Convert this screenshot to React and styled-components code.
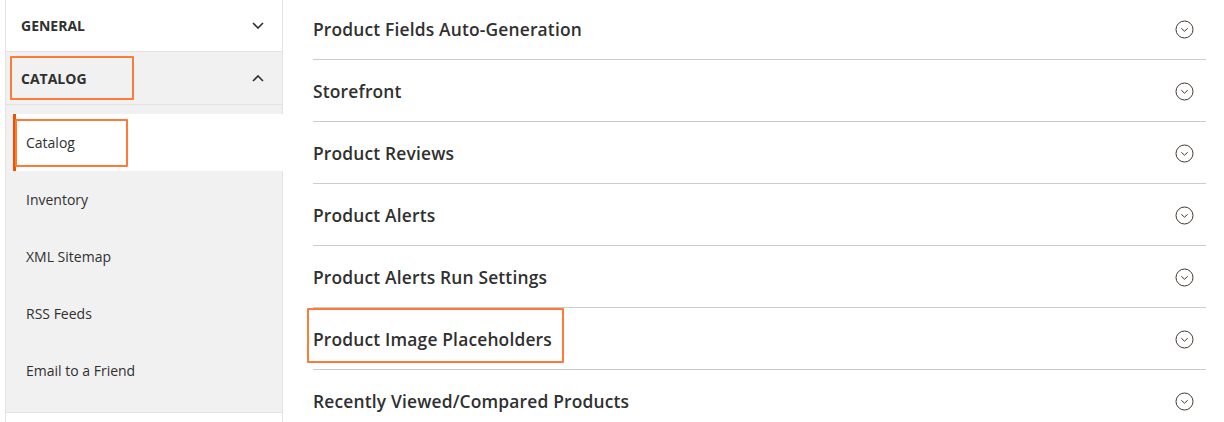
import styled, { createGlobalStyle } from 'styled-components';

const GlobalStyle = createGlobalStyle`
  html, body {
    margin: 0;
    background: #fff;
    overflow: hidden;
  }
  body {
    font-family: "Open Sans", "DejaVu Sans", sans-serif;
    color: #303030;
  }
  * {
    box-sizing: border-box;
  }
`;

const Page = styled.div`
  display: flex;
  align-items: flex-start;
  height: 422px;
  overflow: hidden;
`;

// Left config navigation
const Sidebar = styled.nav`
  flex-shrink: 0;
  align-self: stretch;
  width: 278px;
  margin-left: 5px;
  border-left: 1px solid #e3e3e3;
  border-right: 1px solid #e3e3e3;
`;

const GroupHeader = styled.div`
  position: relative;
  display: flex;
  align-items: center;
  justify-content: space-between;
  height: ${(p) => (p.$open ? '53px' : '52px')};
  padding: 0 18px 0 15px;
  background: ${(p) => (p.$open ? '#f1f1f1' : '#fff')};
  border-bottom: 1px solid #e3e3e3;
`;

const GroupTitle = styled.span`
  font-size: 14px;
  font-weight: 700;
  text-transform: uppercase;
  color: #303030;
`;

const ItemList = styled.ul`
  list-style: none;
  margin: 0;
  padding: 9px 0 13px;
  background: #f1f1f1;
  border-bottom: 1px solid #e3e3e3;
`;

const NavItem = styled.li`
  position: relative;
  display: flex;
  align-items: center;
  height: 57px;
  margin-left: 7px;
  margin-right: -1px;
  padding-left: 10px;
  font-size: 14px;
  color: #303030;
  border-left: 3px solid ${(p) => (p.$current ? '#eb5202' : 'transparent')};
  background: ${(p) => (p.$current ? '#fff' : 'transparent')};
`;

// Orange annotation frames drawn over the screenshot
const Highlight = styled.span`
  position: absolute;
  border: 2px solid #ff7a38;
  border-radius: 1px;
  pointer-events: none;
`;

// Right column with collapsible sections
const Content = styled.div`
  width: 893px;
  margin-left: 30px;
  margin-top: -2px;
`;

const SectionRow = styled.div`
  position: relative;
  display: flex;
  align-items: center;
  justify-content: space-between;
  height: 62px;
  padding-right: 12px;
  border-bottom: 1px solid #cccccc;
`;

const SectionTitle = styled.span`
  font-size: 17.4px;
  font-weight: 600;
  letter-spacing: 0.17px;
  color: #303030;
`;

const CircleToggle = styled.svg`
  width: 19px;
  height: 19px;
  margin-top: 2px;
  flex-shrink: 0;
`;

const Chevron = ({ up }) => (
  <svg width="12" height="7" viewBox="0 0 12 7" fill="none">
    <path
      d={up ? 'M1 6 L6 1 L11 6' : 'M1 1 L6 6 L11 1'}
      stroke="#303030"
      strokeWidth="1.6"
    />
  </svg>
);

const CircleChevron = () => (
  <CircleToggle viewBox="0 0 19 19" fill="none">
    <circle cx="9.5" cy="9.5" r="8.5" stroke="#41362f" strokeWidth="1" />
    <path d="M6.3 8.3 L9.5 11.2 L12.7 8.3" stroke="#41362f" strokeWidth="1" />
  </CircleToggle>
);

const items = ['Catalog', 'Inventory', 'XML Sitemap', 'RSS Feeds', 'Email to a Friend'];

const sections = [
  'Product Fields Auto-Generation',
  'Storefront',
  'Product Reviews',
  'Product Alerts',
  'Product Alerts Run Settings',
  'Product Image Placeholders',
  'Recently Viewed/Compared Products',
];

export default function App() {
  return (
    <>
      <GlobalStyle />
      <Page>
        <Sidebar>
          <GroupHeader>
            <GroupTitle>General</GroupTitle>
            <Chevron />
          </GroupHeader>
          <GroupHeader $open>
            <GroupTitle>Catalog</GroupTitle>
            <Chevron up />
            <Highlight style={{ left: 4, top: 4, width: 124, height: 44 }} />
          </GroupHeader>
          <ItemList>
            {items.map((item, i) => (
              <NavItem key={item} $current={i === 0}>
                {item}
                {i === 0 && (
                  <Highlight style={{ left: -1, top: 5, width: 113, height: 48 }} />
                )}
              </NavItem>
            ))}
          </ItemList>
        </Sidebar>
        <Content>
          {sections.map((title) => (
            <SectionRow key={title}>
              <SectionTitle>{title}</SectionTitle>
              <CircleChevron />
              {title === 'Product Image Placeholders' && (
                <Highlight style={{ left: -6, top: 0, width: 257, height: 55 }} />
              )}
            </SectionRow>
          ))}
        </Content>
      </Page>
    </>
  );
}
